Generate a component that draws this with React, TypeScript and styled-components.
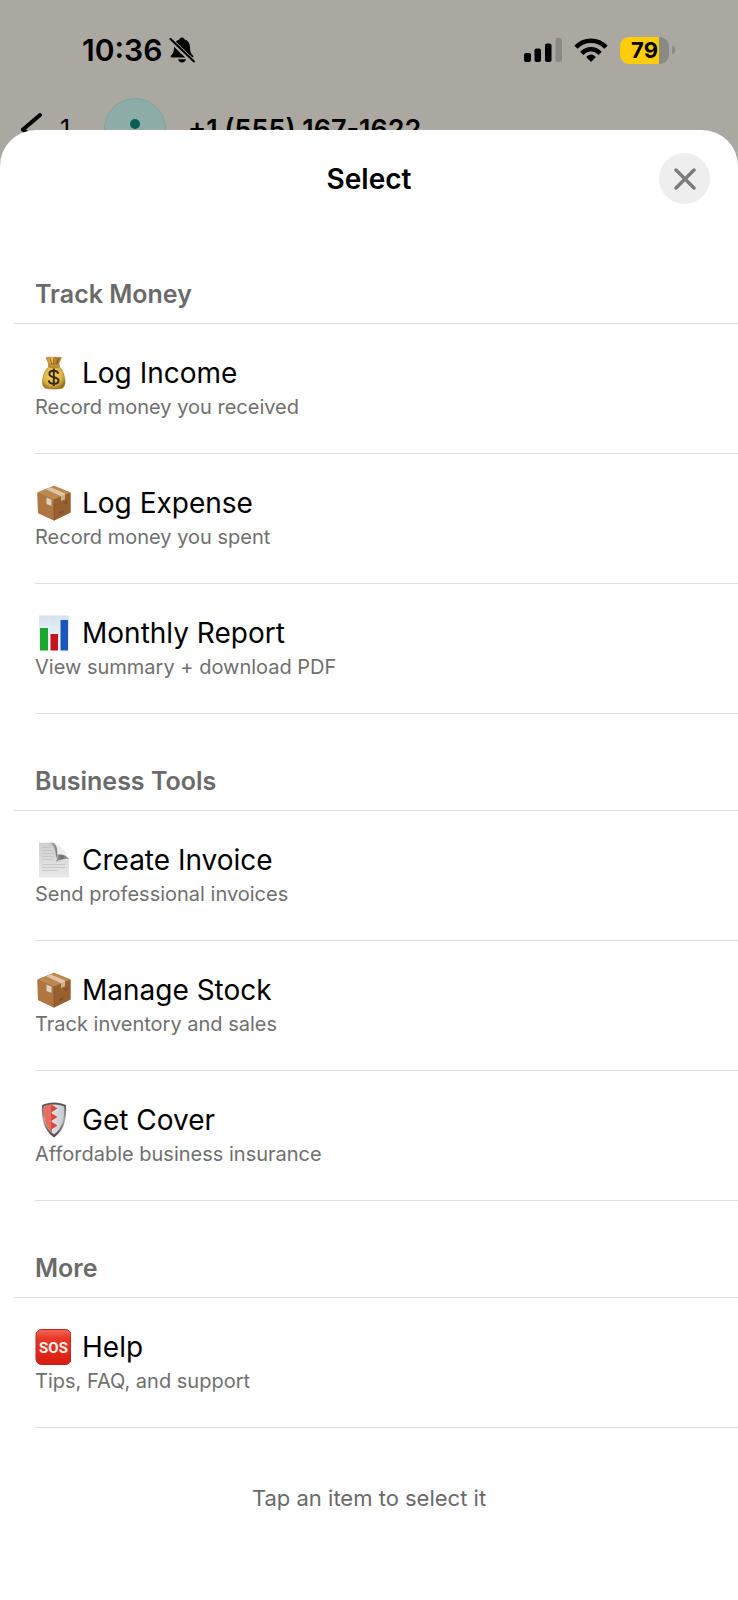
import React from 'react';
import styled, { createGlobalStyle } from 'styled-components';

const GlobalStyle = createGlobalStyle`
  *, *::before, *::after {
    box-sizing: border-box;
  }
  body {
    margin: 0;
    background: #aba8a1;
    font-family: Inter, 'Liberation Sans', sans-serif;
    color: #000;
  }
  button {
    font: inherit;
    color: inherit;
    border: 0;
    padding: 0;
    background: none;
    cursor: pointer;
  }
`;

const Screen = styled.div`
  min-height: 100vh;
  display: flex;
  flex-direction: column;
`;

const StatusBar = styled.div`
  display: flex;
  align-items: center;
  justify-content: space-between;
  padding: 35px 63px 33px 82px;
`;

const StatusGroup = styled.div<{ $gap: number }>`
  display: flex;
  align-items: center;
  height: 30px;
  gap: ${({ $gap }) => $gap}px;
`;

const Time = styled.span`
  font-size: 30px;
  line-height: 30px;
  font-weight: 600;
`;

const Battery = styled.div`
  display: flex;
  align-items: center;
  gap: 3px;
`;

const BatteryBody = styled.div<{ $level: number }>`
  width: 49px;
  height: 27px;
  border-radius: 9px;
  background: linear-gradient(to right, #ffcc0a ${({ $level }) => $level}%, #8b8984 ${({ $level }) => $level}%);
  font-size: 22px;
  line-height: 27px;
  font-weight: 700;
  text-align: center;
`;

const BatteryCap = styled.div`
  width: 3px;
  height: 8px;
  border-radius: 0 4px 4px 0;
  background: #8b8984;
`;

const ChatHeader = styled.header`
  display: flex;
  align-items: center;
  height: 62px;
  padding: 0 20px;
`;

const BackButton = styled.button`
  display: flex;
  align-items: center;
  gap: 16px;
  width: 84px;
  font-size: 25px;
`;

const Avatar = styled.div`
  width: 62px;
  height: 62px;
  border-radius: 50%;
  border: 1px solid #82a39d;
  background: #8fada8;
  overflow: hidden;
`;

const ContactName = styled.span`
  margin-left: 22px;
  font-size: 27px;
  font-weight: 600;
`;

const Sheet = styled.main`
  position: relative;
  z-index: 1;
  flex: 1;
  margin-top: -30px;
  border-radius: 36px 36px 0 0;
  background: #fff;
`;

const SheetHeader = styled.div`
  display: grid;
  grid-template-columns: 1fr auto 1fr;
  align-items: center;
  padding: 23px 28px;
`;

const SheetTitle = styled.h1`
  grid-column: 2;
  margin: 0;
  font-size: 28px;
  line-height: 36px;
  font-weight: 600;
`;

const CloseButton = styled.button`
  justify-self: end;
  display: flex;
  align-items: center;
  justify-content: center;
  width: 51px;
  height: 51px;
  border-radius: 50%;
  background: #eeeeee;
`;

const SectionTitle = styled.h2`
  margin: 0 0 0 14px;
  padding: 51px 21px 13px;
  border-bottom: 1px solid #dfdfdf;
  color: #6a6a6a;
  font-size: 25px;
  line-height: 32px;
  font-weight: 600;
`;

const ItemList = styled.ul`
  list-style: none;
  margin: 0 0 0 35px;
  padding: 0;
`;

const Item = styled.li`
  border-bottom: 1px solid #dfdfdf;
`;

const ItemButton = styled.button`
  display: block;
  width: 100%;
  padding: 30px 0 31px;
  text-align: left;
`;

const ItemTitle = styled.span`
  display: flex;
  align-items: center;
  gap: 11px;
  font-size: 28px;
  line-height: 38px;
`;

const ItemDescription = styled.span`
  display: block;
  color: #6f6f6f;
  font-size: 20px;
  line-height: 30px;
`;

const Hint = styled.p`
  margin: 0;
  padding: 54px 20px;
  color: #6a6a6a;
  font-size: 22px;
  line-height: 32px;
  text-align: center;
`;

const MutedBellIcon = () => (
  <svg width="26" height="28" viewBox="0 0 26 28" aria-hidden="true">
    <path d="M13 1.500c1.300 0 2.300.8 2.600 2 3.500 1 5.400 4 5.400 7.500 0 5 1 6.500 3 8.500.8.800.5 2-.8 2H2.800c-1.300 0-1.600-1.200-.8-2 2-2 3-3.500 3-8.500 0-3.500 1.900-6.500 5.400-7.500.3-1.200 1.300-2 2.600-2z" />
    <path d="M9 23.300h8c-.4 1.900-2 3.200-4 3.200s-3.600-1.300-4-3.200z" />
    <path d="M1 3.500L24.500 26" stroke="#aba8a1" strokeWidth="5" />
    <path d="M1.500 3L25 25.500" stroke="#000" strokeWidth="2" strokeLinecap="round" />
  </svg>
);

const SignalIcon = () => (
  <svg width="38" height="24" viewBox="0 0 38 24" aria-hidden="true">
    <rect x="0" y="15" width="7" height="9" rx="2" />
    <rect x="10.500" y="10.500" width="6.500" height="13.500" rx="2" />
    <rect x="21" y="5.500" width="6.500" height="18.500" rx="2" />
    <rect x="31.500" y="0" width="6.500" height="24" rx="2" fill="#8b8984" />
  </svg>
);

const WifiIcon = () => (
  <svg width="34" height="24" viewBox="0 0 34 24" fill="none" stroke="#000" strokeWidth="4.600" aria-hidden="true">
    <path d="M2 9.300C6 5 11 2.700 17 2.700S28 5 32 9.300" />
    <path d="M7.800 15.300C10.300 12.700 13.400 11.200 17 11.200s6.700 1.500 9.200 4.100" />
    <path d="M12.300 19.300C13.500 17.500 15.200 16.500 17 16.500s3.500 1 4.700 2.800L17 24z" fill="#000" stroke="none" />
  </svg>
);

const BackIcon = () => (
  <svg width="24" height="34" viewBox="0 0 24 34" aria-hidden="true">
    <path d="M20 3L3 17.500L20 32" fill="none" stroke="#000" strokeWidth="4" strokeLinecap="round" strokeLinejoin="round" />
  </svg>
);

const PersonIcon = () => (
  <svg width="60" height="60" viewBox="0 0 60 60" fill="#075e54" aria-hidden="true">
    <circle cx="30" cy="25" r="5" />
    <path d="M18 44c0-7 5-11 12-11s12 4 12 11z" />
  </svg>
);

const CloseIcon = () => (
  <svg width="22" height="22" viewBox="0 0 22 22" aria-hidden="true">
    <path d="M2 2L20 20M20 2L2 20" stroke="#7b7b7d" strokeWidth="3.400" strokeLinecap="round" />
  </svg>
);

const MoneyBagIcon = () => (
  <svg width="36" height="36" viewBox="0 0 36 36" aria-hidden="true">
    <defs>
      <radialGradient id="bag" cx="0.45" cy="0.4" r="0.65">
        <stop offset="0" stopColor="#f4d76a" />
        <stop offset="0.65" stopColor="#d9b140" />
        <stop offset="1" stopColor="#94691c" />
      </radialGradient>
      <linearGradient id="bagNeck" x1="0" x2="1" y1="0" y2="0">
        <stop offset="0" stopColor="#b88428" />
        <stop offset="0.4" stopColor="#edc557" />
        <stop offset="0.7" stopColor="#a66d20" />
        <stop offset="1" stopColor="#c58f33" />
      </linearGradient>
    </defs>
    <path d="M11 2.500c2 .5 3-.9 5-.3 2 .5 3-.6 5 .1 2 .5 3-.6 5.500.4L22.500 11h-8z" fill="url(#bagNeck)" stroke="#98702a" strokeWidth="0.500" />
    <path d="M15 3.500l2 6M19 3l-.5 6M24 3.500L21 10" stroke="#855518" strokeWidth="0.900" />
    <path d="M15 11h8c4 2.200 6.500 8 7 15 .3 4-1 7-4 7.500-4.500.8-10 .8-14.500 0-3-.5-4.300-3.500-4-7.500.5-7 3.500-12.800 7.500-15z" fill="url(#bag)" stroke="#9b7426" strokeWidth="0.500" />
    <rect x="13.500" y="9" width="11" height="3.200" rx="1.600" fill="#c8993a" stroke="#805019" strokeWidth="0.600" />
    <path d="M23.300 18.700c-.4-2-2-3-4.500-3s-4.400 1.200-4.400 3.200c0 4.500 9.100 2.200 9.100 6.600 0 2-1.800 3.300-4.700 3.300s-4.700-1.300-5-3.500M18.800 13.500v17.500" fill="none" stroke="#39290d" strokeWidth="2" />
  </svg>
);

const PackageIcon = () => (
  <svg width="36" height="36" viewBox="0 0 36 36" aria-hidden="true">
    <path d="M2.500 7.500L19 .8 35.500 7.500v20L19 35.500 3 28z" fill="#b47b47" />
    <path d="M2.500 7.500L19 .8 35.500 7.500 19 14.500z" fill="#bd8852" />
    <path d="M2.500 7.500L19 14.500v21L3 28z" fill="#af763f" />
    <path d="M19 14.500l16.500-7v20L19 35.500z" fill="#96602f" />
    <path d="M11 4.200l4.500-1.900L30 8.500v5.500l-4 1.800v-4.500z" fill="#dfc4a5" />
    <path d="M26 11.300l4-1.900v4.800L26 16z" fill="#d1b18c" />
    <path d="M11.500 12.500l5 2.200v6.300l-5-2z" fill="#ded2c5" />
    <path d="M24.500 27l4-1.900v2.200l-4 1.900z" fill="#79502b" />
    <path d="M29.500 17l3.500-1.500v2l-3.500 1.500z" fill="#835428" />
    <path d="M19 14.500v21" stroke="#875326" strokeWidth="0.600" />
  </svg>
);

const ChartIcon = () => (
  <svg width="36" height="36" viewBox="0 0 36 36" aria-hidden="true">
    <defs>
      <linearGradient id="chartBack" x1="0" x2="0" y1="0" y2="1">
        <stop offset="0" stopColor="#d5e3ee" />
        <stop offset="1" stopColor="#f7fafc" />
      </linearGradient>
    </defs>
    <rect x="4" y="0.500" width="30" height="35" fill="url(#chartBack)" />
    <path d="M14 1v34M24 1v34M4 12h30M4 24h30" stroke="#e9f0f6" strokeWidth="0.800" />
    <rect x="5" y="13" width="8" height="22.500" fill="#18a82c" />
    <rect x="15.500" y="19" width="7.500" height="16.500" fill="#c3131d" />
    <rect x="25.500" y="5" width="7.500" height="30.500" fill="#1957bd" />
  </svg>
);

const DocumentIcon = () => (
  <svg width="36" height="36" viewBox="0 0 36 36" aria-hidden="true">
    <defs>
      <linearGradient id="page" x1="0" x2="0" y1="0" y2="1">
        <stop offset="0" stopColor="#cfcfcf" />
        <stop offset="1" stopColor="#e9e9e9" />
      </linearGradient>
      <linearGradient id="pageFold" x1="0" x2="1" y1="0" y2="0">
        <stop offset="0" stopColor="#9a9a9a" />
        <stop offset="0.450" stopColor="#6b6b6b" />
        <stop offset="1" stopColor="#a8a8a8" />
      </linearGradient>
      <linearGradient id="pageEdge" x1="0" x2="1" y1="0" y2="0">
        <stop offset="0" stopColor="#cfcfcf" />
        <stop offset="1" stopColor="#7c7c7c" />
      </linearGradient>
    </defs>
    <path d="M4 .8h14c3.500 1 4.500 5 4.500 11.500L34 16v19.500H4z" fill="url(#page)" />
    <path d="M13 .8h5c3.500 1 4.800 6 4.500 13L21 16c0-7-2-14-8-15.200z" fill="url(#pageEdge)" />
    <path d="M19 1c5 1 11 7 14.500 14-3-2.500-7-2.500-10.700-1C23 8 22 3 19 1z" fill="#eeeeee" />
    <path d="M22.700 12.500c4.500-.5 9 .5 11.300 4.500-4-.6-9 .5-13 3 1-2.500 1.600-4.500 1.700-7.500z" fill="url(#pageFold)" />
    <path d="M7 5.500h9M7 8.500h11M7 11.500h12M7 14.500h12M7 17.500h11M7 22.500h23M7 25.500h23M7 28.500h16" stroke="#bdbdbd" strokeWidth="0.700" />
  </svg>
);

const ShieldIcon = () => (
  <svg width="36" height="36" viewBox="0 0 36 36" aria-hidden="true">
    <defs>
      <linearGradient id="shieldRim" x1="0" x2="0" y1="0" y2="1">
        <stop offset="0" stopColor="#51504e" />
        <stop offset="0.500" stopColor="#aaa6a0" />
        <stop offset="1" stopColor="#43413e" />
      </linearGradient>
      <linearGradient id="shieldRight" x1="0" x2="1" y1="0" y2="0">
        <stop offset="0" stopColor="#f3f4f5" />
        <stop offset="1" stopColor="#c4cace" />
      </linearGradient>
    </defs>
    <path d="M19 .5c4 .2 8.500 1 12 2.500.7 14-1.500 25-12 32.500C8.500 28 6.300 17 7 3 10.500 1.500 15 .7 19 .5z" fill="url(#shieldRim)" />
    <path d="M19 2.500c3.700.2 7 .8 10.200 1.900.4 12.500-1.800 21.600-10.200 28-8.400-6.400-10.600-15.500-10.200-28C12 3.300 15.300 2.700 19 2.500z" fill="url(#shieldRight)" />
    <path d="M17 2.600c-3 .2-5.500.8-8.200 1.800C8.400 16 10.300 24 17 30.800V27l5-3.500-5-3.300v-2l5-3.200-5-3.300V9.500l5-3.500z" fill="#ea6d61" />
    <path d="M16 3l6.500 3.500-6.500 4zM16 11l6.500 4-6.500 4zM16 19.500l6.500 4-6.500 4z" fill="#d84a40" />
  </svg>
);

const SosIcon = () => (
  <svg width="36" height="36" viewBox="0 0 36 36" aria-hidden="true">
    <defs>
      <linearGradient id="sosBack" x1="0" x2="0" y1="0" y2="1">
        <stop offset="0" stopColor="#f5695b" />
        <stop offset="0.250" stopColor="#e93827" />
        <stop offset="1" stopColor="#d71d10" />
      </linearGradient>
    </defs>
    <rect x="1" y="0.500" width="35" height="35" rx="5.500" fill="url(#sosBack)" stroke="#be2319" />
    <text x="18.500" y="24" textAnchor="middle" fill="#fff5ef" fontFamily="Roboto, sans-serif" fontSize="15" fontWeight="700">
      SOS
    </text>
  </svg>
);

interface MenuItem {
  icon: React.FC;
  title: string;
  description: string;
}

interface MenuSection {
  title: string;
  items: MenuItem[];
}

const sections: MenuSection[] = [
  {
    title: 'Track Money',
    items: [
      { icon: MoneyBagIcon, title: 'Log Income', description: 'Record money you received' },
      { icon: PackageIcon, title: 'Log Expense', description: 'Record money you spent' },
      { icon: ChartIcon, title: 'Monthly Report', description: 'View summary + download PDF' },
    ],
  },
  {
    title: 'Business Tools',
    items: [
      { icon: DocumentIcon, title: 'Create Invoice', description: 'Send professional invoices' },
      { icon: PackageIcon, title: 'Manage Stock', description: 'Track inventory and sales' },
      { icon: ShieldIcon, title: 'Get Cover', description: 'Affordable business insurance' },
    ],
  },
  {
    title: 'More',
    items: [{ icon: SosIcon, title: 'Help', description: 'Tips, FAQ, and support' }],
  },
];

const App: React.FC = () => (
  <>
    <GlobalStyle />
    <Screen>
      <StatusBar>
        <StatusGroup $gap={7}>
          <Time>10:36</Time>
          <MutedBellIcon />
        </StatusGroup>
        <StatusGroup $gap={12}>
          <SignalIcon />
          <WifiIcon />
          <Battery>
            <BatteryBody $level={79}>79</BatteryBody>
            <BatteryCap />
          </Battery>
        </StatusGroup>
      </StatusBar>
      <ChatHeader>
        <BackButton type="button" aria-label="Back, 1 unread">
          <BackIcon />
          1
        </BackButton>
        <Avatar>
          <PersonIcon />
        </Avatar>
        <ContactName>+1 (555) 167-1622</ContactName>
      </ChatHeader>
      <Sheet>
        <SheetHeader>
          <SheetTitle>Select</SheetTitle>
          <CloseButton type="button" aria-label="Close">
            <CloseIcon />
          </CloseButton>
        </SheetHeader>
        {sections.map((section) => (
          <section key={section.title}>
            <SectionTitle>{section.title}</SectionTitle>
            <ItemList>
              {section.items.map(({ icon: Icon, title, description }) => (
                <Item key={title}>
                  <ItemButton type="button">
                    <ItemTitle>
                      <Icon />
                      {title}
                    </ItemTitle>
                    <ItemDescription>{description}</ItemDescription>
                  </ItemButton>
                </Item>
              ))}
            </ItemList>
          </section>
        ))}
        <Hint>Tap an item to select it</Hint>
      </Sheet>
    </Screen>
  </>
);

export default App;
